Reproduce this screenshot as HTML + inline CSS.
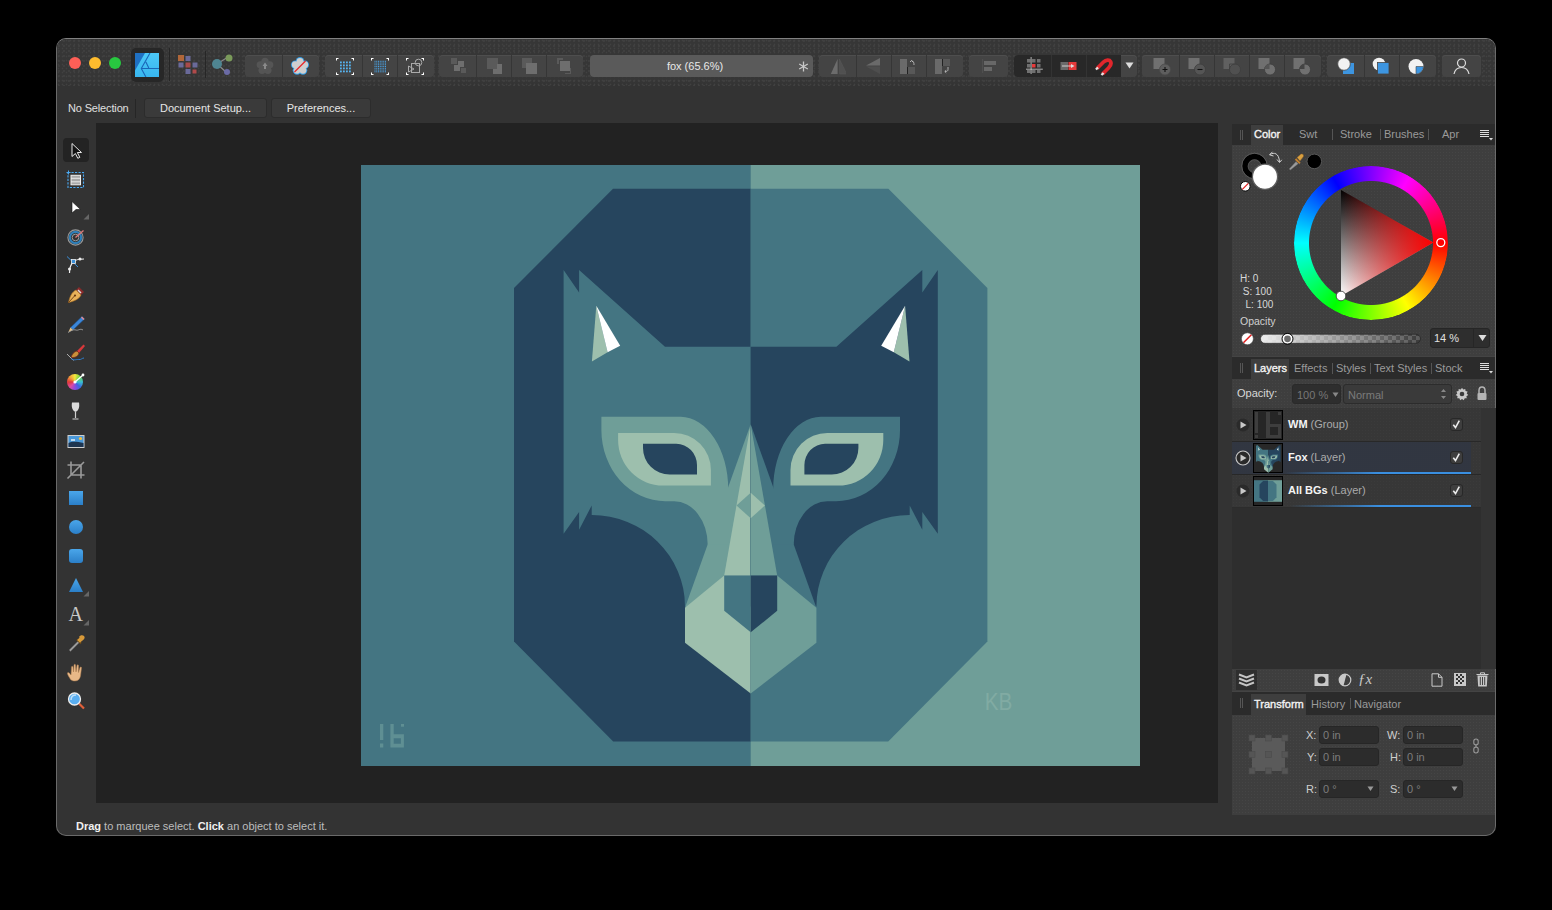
<!DOCTYPE html>
<html><head><meta charset="utf-8">
<style>
*{box-sizing:border-box;margin:0;padding:0}
html,body{width:1552px;height:910px;overflow:hidden;background:#000;font-family:"Liberation Sans",sans-serif;color:#ddd}
.a{position:absolute}
#win{position:absolute;left:56px;top:38px;width:1440px;height:798px;border-radius:10px;background:#333;border:1px solid #6a6a6a;border-top-color:#808080;overflow:hidden}
#topbar{position:absolute;left:0;top:0;width:1438px;height:47px;background-color:#363636;background-image:radial-gradient(circle at 1.5px 1.5px,#414141 0.7px,transparent 1.1px),radial-gradient(circle at 2px 2px,#3f3f3f 0.7px,transparent 1.1px),linear-gradient(#363636 85%,#333);background-size:4px 4px,5px 5px,100% 100%}
#ws{position:absolute;left:96px;top:123px;width:1122px;height:680px;background:#222}
.grp{position:absolute;top:55px;height:22px;background:#444;border-radius:4px;overflow:hidden;box-shadow:inset 0 1px 0 #4e4e4e}
.dv{position:absolute;top:0;width:1px;height:22px;background:#363636}
.ic{position:absolute;overflow:visible}
.tbtn{position:absolute;height:20px;background:#3a3a3a;border:1px solid #2c2c2c;border-radius:3px;font-size:11px;color:#e6e6e6;text-align:center;line-height:18px}
.panel{position:absolute;left:1232px;width:263px;background-color:#3e3e3e;background-image:radial-gradient(circle at 1.5px 1.5px,#454545 0.6px,transparent 1px);background-size:3px 3px}
.tabbar{position:absolute;left:0;width:263px;height:21px;background:#2b2b2b}
.tab{position:absolute;top:0;font-size:11px;color:#9a9a9a;line-height:21px;white-space:nowrap}
.tab.on{color:#f4f4f4;-webkit-text-stroke:0.35px #f4f4f4}

.sep{position:absolute;top:6px;width:1px;height:11px;background:#555}
.lbl{position:absolute;font-size:11px;color:#d0d0d0;white-space:nowrap}
.fld{position:absolute;background:#2c2c2c;border:1px solid #262626;border-radius:3px;font-size:11px;color:#7a7a7a;white-space:nowrap;padding-left:3px}
</style></head><body>
<div id="win"><div id="topbar"></div></div>
<div id="ws"></div>
<!-- traffic lights -->
<div class="a" style="left:69px;top:57px;width:12px;height:12px;border-radius:6px;background:#fe5f57"></div>
<div class="a" style="left:89px;top:57px;width:12px;height:12px;border-radius:6px;background:#febc2e"></div>
<div class="a" style="left:109px;top:57px;width:12px;height:12px;border-radius:6px;background:#28c840"></div>
<!-- logo -->
<div class="a" style="left:131px;top:48px;width:33px;height:34px;border-radius:5px;background:#272727"></div>
<svg class="a" style="left:135px;top:53px" width="24" height="24" viewBox="0 0 24 24">
<defs><linearGradient id="lg" x1="0" y1="0" x2="0" y2="1"><stop offset="0" stop-color="#4cc8f7"/><stop offset="1" stop-color="#38b6ef"/></linearGradient></defs>
<rect width="24" height="24" fill="url(#lg)"/>
<path d="M0,0 H10 L0,17.5 Z" fill="#1f70c2"/>
<path d="M15,0 L6.3,15.5 L10.9,24 M6.3,15.5 H24 M10.9,9 L13.8,15" stroke="#1a66b8" stroke-width="1.1" fill="none"/>
</svg>
<div class="a" style="left:169px;top:48px;width:1px;height:33px;background:#262626"></div>
<!-- persona -->
<svg class="a" style="left:177px;top:54px" width="22" height="22" viewBox="0 0 22 22">
<rect x="1" y="1" width="6" height="6" fill="#b0673a"/>
<rect x="8.5" y="2" width="5" height="5" fill="#6a6a9a"/>
<rect x="1.5" y="8.5" width="5" height="5" fill="#6a6a9a"/>
<rect x="8.5" y="8.5" width="5" height="5" fill="#a94a4a"/>
<rect x="15.5" y="8.5" width="5" height="5" fill="#6a6a9a"/>
<rect x="8.5" y="15" width="5" height="5" fill="#6a6a9a"/>
<rect x="15.5" y="15.5" width="4" height="4" fill="#b04a4a"/>
</svg>
<div class="a" style="left:205px;top:51px;width:1px;height:27px;background:#262626"></div>
<!-- share -->
<svg class="a" style="left:211px;top:54px" width="24" height="22" viewBox="0 0 24 22">
<path d="M6,10 L17,3 M6,10 L15,18" stroke="#8a8a8a" stroke-width="1.2"/>
<circle cx="6" cy="10" r="5" fill="#4f8591"/>
<circle cx="18" cy="4" r="3.5" fill="#7a9a5a"/>
<circle cx="16" cy="18" r="3" fill="#6a6aa5"/>
</svg>
<!-- G1 -->
<div class="grp" style="left:245px;width:74px"><div class="dv" style="left:37px"></div></div>
<svg class="a" style="left:255px;top:57px" width="20" height="18" viewBox="0 0 20 18"><g fill="#555"><circle cx="10.00" cy="4.30" r="3.6"/><circle cx="14.76" cy="7.75" r="3.6"/><circle cx="12.94" cy="13.35" r="3.6"/><circle cx="7.06" cy="13.35" r="3.6"/><circle cx="5.24" cy="7.75" r="3.6"/><circle cx="10" cy="9.3" r="5.2"/></g><path d="M10,5.5 L7.5,9 H9 V12 H11 V9 H12.5 Z" fill="#8a8a8a"/></svg>
<svg class="a" style="left:290px;top:57px" width="20" height="18" viewBox="0 0 20 18"><g fill="#2e9be6"><circle cx="10.00" cy="4.30" r="4.3"/><circle cx="14.76" cy="7.75" r="4.3"/><circle cx="12.94" cy="13.35" r="4.3"/><circle cx="7.06" cy="13.35" r="4.3"/><circle cx="5.24" cy="7.75" r="4.3"/><circle cx="10" cy="9.3" r="5.9"/></g><g fill="#cfcfcf"><circle cx="10.00" cy="4.30" r="3.4"/><circle cx="14.76" cy="7.75" r="3.4"/><circle cx="12.94" cy="13.35" r="3.4"/><circle cx="7.06" cy="13.35" r="3.4"/><circle cx="5.24" cy="7.75" r="3.4"/><circle cx="10" cy="9.3" r="5.0"/></g><path d="M4.5,15 L15.5,4" stroke="#e8262a" stroke-width="1.3"/></svg>
<!-- G2 -->
<div class="grp" style="left:325px;width:109px"><div class="dv" style="left:37px"></div><div class="dv" style="left:72px"></div></div>
<svg class="a" style="left:336px;top:58px" width="18" height="17" viewBox="0 0 18 17">
<g fill="#fff"><path d="M0,0 H2.5 V1 H1 V2.5 H0 Z"/><path d="M18,0 H15.5 V1 H17 V2.5 H18 Z"/><path d="M0,17 H2.5 V16 H1 V14.5 H0 Z"/><path d="M18,17 H15.5 V16 H17 V14.5 H18 Z"/></g>
<g fill="#56b3f0"><rect x="4" y="3.5" width="1.8" height="1.8"/><rect x="7" y="3.5" width="1.8" height="1.8"/><rect x="10" y="3.5" width="1.8" height="1.8"/><rect x="13" y="3.5" width="1.8" height="1.8"/>
<rect x="4" y="6.5" width="1.8" height="1.8"/><rect x="7" y="6.5" width="1.8" height="1.8"/><rect x="10" y="6.5" width="1.8" height="1.8"/><rect x="13" y="6.5" width="1.8" height="1.8"/>
<rect x="4" y="9.5" width="1.8" height="1.8"/><rect x="7" y="9.5" width="1.8" height="1.8"/><rect x="10" y="9.5" width="1.8" height="1.8"/><rect x="13" y="9.5" width="1.8" height="1.8"/>
<rect x="4" y="12.5" width="1.8" height="1.8"/><rect x="7" y="12.5" width="1.8" height="1.8"/><rect x="10" y="12.5" width="1.8" height="1.8"/><rect x="13" y="12.5" width="1.8" height="1.8"/></g>
</svg>
<svg class="a" style="left:371px;top:58px" width="18" height="17" viewBox="0 0 18 17">
<g fill="#fff"><path d="M0,0 H2.5 V1 H1 V2.5 H0 Z"/><path d="M18,0 H15.5 V1 H17 V2.5 H18 Z"/><path d="M0,17 H2.5 V16 H1 V14.5 H0 Z"/><path d="M18,17 H15.5 V16 H17 V14.5 H18 Z"/></g>
<g fill="#4aa6ea"><rect x="3.50" y="2.80" width="1" height="1"/><rect x="3.50" y="4.55" width="1" height="1"/><rect x="3.50" y="6.30" width="1" height="1"/><rect x="3.50" y="8.05" width="1" height="1"/><rect x="3.50" y="9.80" width="1" height="1"/><rect x="3.50" y="11.55" width="1" height="1"/><rect x="3.50" y="13.30" width="1" height="1"/><rect x="5.25" y="2.80" width="1" height="1"/><rect x="5.25" y="4.55" width="1" height="1"/><rect x="5.25" y="6.30" width="1" height="1"/><rect x="5.25" y="8.05" width="1" height="1"/><rect x="5.25" y="9.80" width="1" height="1"/><rect x="5.25" y="11.55" width="1" height="1"/><rect x="5.25" y="13.30" width="1" height="1"/><rect x="7.00" y="2.80" width="1" height="1"/><rect x="7.00" y="4.55" width="1" height="1"/><rect x="7.00" y="6.30" width="1" height="1"/><rect x="7.00" y="8.05" width="1" height="1"/><rect x="7.00" y="9.80" width="1" height="1"/><rect x="7.00" y="11.55" width="1" height="1"/><rect x="7.00" y="13.30" width="1" height="1"/><rect x="8.75" y="2.80" width="1" height="1"/><rect x="8.75" y="4.55" width="1" height="1"/><rect x="8.75" y="6.30" width="1" height="1"/><rect x="8.75" y="8.05" width="1" height="1"/><rect x="8.75" y="9.80" width="1" height="1"/><rect x="8.75" y="11.55" width="1" height="1"/><rect x="8.75" y="13.30" width="1" height="1"/><rect x="10.50" y="2.80" width="1" height="1"/><rect x="10.50" y="4.55" width="1" height="1"/><rect x="10.50" y="6.30" width="1" height="1"/><rect x="10.50" y="8.05" width="1" height="1"/><rect x="10.50" y="9.80" width="1" height="1"/><rect x="10.50" y="11.55" width="1" height="1"/><rect x="10.50" y="13.30" width="1" height="1"/><rect x="12.25" y="2.80" width="1" height="1"/><rect x="12.25" y="4.55" width="1" height="1"/><rect x="12.25" y="6.30" width="1" height="1"/><rect x="12.25" y="8.05" width="1" height="1"/><rect x="12.25" y="9.80" width="1" height="1"/><rect x="12.25" y="11.55" width="1" height="1"/><rect x="12.25" y="13.30" width="1" height="1"/><rect x="14.00" y="2.80" width="1" height="1"/><rect x="14.00" y="4.55" width="1" height="1"/><rect x="14.00" y="6.30" width="1" height="1"/><rect x="14.00" y="8.05" width="1" height="1"/><rect x="14.00" y="9.80" width="1" height="1"/><rect x="14.00" y="11.55" width="1" height="1"/><rect x="14.00" y="13.30" width="1" height="1"/></g>
</svg>
<svg class="a" style="left:406px;top:58px" width="18" height="17" viewBox="0 0 18 17">
<g fill="#fff"><path d="M0,0 H2.5 V1 H1 V2.5 H0 Z"/><path d="M18,0 H15.5 V1 H17 V2.5 H18 Z"/><path d="M0,17 H2.5 V16 H1 V14.5 H0 Z"/><path d="M18,17 H15.5 V16 H17 V14.5 H18 Z"/></g>
<g fill="none" stroke="#aaa" stroke-width="1"><rect x="5.5" y="5.5" width="8" height="9"/><circle cx="12.5" cy="4.5" r="3.3"/><path d="M2.5,8 V14 L8,11 Z"/></g>
</svg>
<!-- G3 -->
<div class="grp" style="left:439px;width:144px"><div class="dv" style="left:37px"></div><div class="dv" style="left:72px"></div><div class="dv" style="left:107px"></div></div>
<svg class="a" style="left:450px;top:57px" width="16" height="17" viewBox="0 0 16 17">
<rect x="1" y="1" width="6" height="6" fill="#5a5a5a"/><rect x="8" y="4" width="6" height="6" fill="#6e6e6e"/><rect x="4" y="8" width="6" height="6" fill="#6e6e6e"/><rect x="11" y="11" width="5" height="5" fill="#5a5a5a"/>
</svg>
<svg class="a" style="left:486px;top:57px" width="16" height="17" viewBox="0 0 16 17">
<rect x="1" y="1" width="11" height="11" fill="#5a5a5a"/><path d="M7,17 H16 V7 H11 V12 H7 Z" fill="#6e6e6e"/>
</svg>
<svg class="a" style="left:521px;top:57px" width="16" height="17" viewBox="0 0 16 17">
<rect x="1" y="1" width="10" height="10" fill="#5a5a5a"/><rect x="5" y="6" width="11" height="11" fill="#6e6e6e"/>
</svg>
<svg class="a" style="left:556px;top:57px" width="16" height="17" viewBox="0 0 16 17">
<path d="M1,1 H7 V3 H3 V7 H1 Z" fill="#5a5a5a"/><rect x="4" y="4" width="10" height="10" fill="#6e6e6e"/><path d="M15,11 V17 H9 V16 H14 V11 Z" fill="#5a5a5a"/>
</svg>
<!-- title -->
<div class="a" style="left:590px;top:55px;width:223px;height:22px;border-radius:4px;background:#5a5a5a;font-size:11px;color:#e8e8e8;line-height:22px;text-align:center;padding-right:13px">fox (65.6%)</div>
<svg class="a" style="left:797px;top:60px" width="13" height="13" viewBox="0 0 13 13"><path d="M6.5,1.5 V11.5 M2.2,4 L10.8,9 M2.2,9 L10.8,4" stroke="#c8c8c8" stroke-width="1.3"/></svg>
<!-- G4 -->
<div class="grp" style="left:819px;width:144px"><div class="dv" style="left:37px"></div><div class="dv" style="left:72px"></div><div class="dv" style="left:107px"></div></div>
<svg class="a" style="left:830px;top:57px" width="16" height="18" viewBox="0 0 16 18">
<path d="M7.6,2 V17 H0.8 Z" fill="#6c6c6c"/><path d="M9.4,2 V17 H16.8 Z" fill="#505050" stroke="#5a5a5a" stroke-width="0.5"/>
</svg>
<svg class="a" style="left:865px;top:57px" width="16" height="18" viewBox="0 0 16 18">
<path d="M15,1 V8.5 H1 Z" fill="#6a6a6a"/><path d="M15,9.5 V17 L1,9.5 Z" fill="#4e4e4e"/>
</svg>
<svg class="a" style="left:900px;top:57px" width="16" height="18" viewBox="0 0 16 18">
<rect x="0" y="2" width="7" height="15" fill="#6a6a6a"/><rect x="7" y="10" width="1" height="7" fill="#222"/><rect x="8" y="10" width="7" height="7" fill="#585858"/>
<path d="M10,5 L11.5,3.5 L13,5 M11.5,3.8 C13.5,4 14,5.5 14,8" stroke="#bbb" stroke-width="0.9" fill="none"/>
</svg>
<svg class="a" style="left:935px;top:57px" width="16" height="18" viewBox="0 0 16 18">
<rect x="0" y="2" width="7" height="15" fill="#6a6a6a"/><rect x="7" y="2" width="1" height="7" fill="#222"/><rect x="8" y="2" width="7" height="7" fill="#585858"/>
<path d="M13,10 V12.5 C13,14 12,14.5 10,14.5 M11.2,13.2 L9.8,14.5 L11.2,15.8" stroke="#bbb" stroke-width="0.9" fill="none"/>
</svg>
<!-- G5 -->
<div class="grp" style="left:969px;width:39px"></div>
<svg class="a" style="left:978px;top:57px" width="18" height="18" viewBox="0 0 18 18">
<rect x="4.3" y="2" width="0.8" height="14" fill="#555"/><rect x="6" y="4" width="12" height="4" fill="#686868"/><rect x="6" y="10" width="8" height="4" fill="#686868"/>
</svg>
<!-- G6 snapping -->
<div class="grp" style="left:1014px;width:123px;background:#444"><div class="a" style="left:0;top:0;width:107px;height:22px;background:#282828"></div><div class="dv" style="left:37px;background:#333"></div><div class="dv" style="left:72px;background:#333"></div></div>
<svg class="a" style="left:1025px;top:56px" width="20" height="20" viewBox="0 0 20 20">
<g fill="#707070"><rect x="2" y="3" width="3.5" height="3.5"/><rect x="7" y="3" width="3.5" height="3.5"/><rect x="12" y="3" width="3.5" height="3.5"/><rect x="2" y="8" width="3.5" height="3.5"/><rect x="12" y="8" width="3.5" height="3.5"/><rect x="2" y="14" width="3.5" height="3"/><rect x="7" y="14" width="3.5" height="3"/><rect x="12" y="14" width="3.5" height="3"/></g>
<rect x="7" y="8" width="3.5" height="3.5" fill="#e8393a"/>
<path d="M6.1,1 V18 M1,13.2 H17.8" stroke="#d4d4d4" stroke-width="0.8"/>
</svg>
<svg class="a" style="left:1059px;top:56px" width="20" height="20" viewBox="0 0 20 20">
<rect x="1.5" y="6" width="7.5" height="8" fill="#6a6a6a"/><rect x="9.5" y="6" width="8" height="8" fill="#e53a3b"/>
<path d="M3,10 H14" stroke="#ddd" stroke-width="0.9"/><path d="M12,8 L15.5,10 L12,12 Z" fill="#ddd"/>
</svg>
<svg class="a" style="left:1094px;top:56px" width="20" height="20" viewBox="0 0 20 20">
<path d="M3,12.5 L9.5,6 C12,3.5 15.5,3.5 16.5,5.5 C17.5,7.5 16.5,10 14.5,12 L8.5,18" stroke="#e0262c" stroke-width="3.8" fill="none" stroke-linecap="butt"/>
<path d="M2.2,11.7 L3.8,13.3 M7.7,17.2 L9.3,18.8" stroke="#e4e4e4" stroke-width="3"/>
</svg>
<svg class="a" style="left:1125px;top:61px" width="9" height="9" viewBox="0 0 9 9"><path d="M0.5,1.5 H8.5 L4.5,7.5 Z" fill="#ddd"/></svg>
<!-- G7 -->
<div class="grp" style="left:1142px;width:179px"><div class="dv" style="left:37px"></div><div class="dv" style="left:72px"></div><div class="dv" style="left:107px"></div><div class="dv" style="left:142px"></div></div>
<svg class="a" style="left:1152px;top:57px" width="20" height="19" viewBox="0 0 20 19">
<rect x="1.5" y="1" width="11" height="11" fill="#707070"/><circle cx="13" cy="12.5" r="5.5" fill="#5e5e5e" stroke="#4a4a4a" stroke-width="0.8"/><path d="M10.5,12.5 H15.5 M13,10 V15" stroke="#111" stroke-width="1.1"/>
</svg>
<svg class="a" style="left:1187px;top:57px" width="20" height="19" viewBox="0 0 20 19">
<rect x="1.5" y="1" width="11" height="11" fill="#707070"/><circle cx="13" cy="12.5" r="5.5" fill="#555" stroke="#3e3e3e" stroke-width="0.8"/><path d="M10.5,12.5 H15.5" stroke="#111" stroke-width="1.1"/>
</svg>
<svg class="a" style="left:1222px;top:57px" width="20" height="19" viewBox="0 0 20 19">
<rect x="1.5" y="1" width="11" height="11" fill="#606060"/><circle cx="13" cy="12.5" r="5.5" fill="#505050" stroke="#3e3e3e" stroke-width="0.8"/><path d="M7.5,12 V7 H12.5" fill="none" stroke="#3e3e3e" stroke-width="0.8"/>
</svg>
<svg class="a" style="left:1257px;top:57px" width="20" height="19" viewBox="0 0 20 19">
<rect x="1.5" y="1" width="11" height="11" fill="#707070"/><circle cx="13" cy="12.5" r="5.5" fill="#707070" stroke="#3e3e3e" stroke-width="0.8"/><path d="M7.5,12 A5.5,5.5 0 0 1 12.5,7 V12 Z" fill="#555"/>
</svg>
<svg class="a" style="left:1292px;top:57px" width="20" height="19" viewBox="0 0 20 19">
<rect x="1.5" y="1" width="11" height="11" fill="#707070"/><circle cx="13" cy="12.5" r="5.5" fill="#707070" stroke="#3e3e3e" stroke-width="0.8"/><path d="M7.5,12 A5.5,5.5 0 0 1 12.5,7 V12 Z" fill="#444"/>
</svg>
<!-- G8 -->
<div class="grp" style="left:1327px;width:109px"><div class="dv" style="left:37px"></div><div class="dv" style="left:72px"></div></div>
<svg class="a" style="left:1336px;top:57px" width="20" height="19" viewBox="0 0 20 19">
<rect x="7" y="6" width="11" height="11" fill="#3d95e0"/><circle cx="8" cy="7" r="6.3" fill="#f2f2f2" stroke="#444" stroke-width="0.8"/>
</svg>
<svg class="a" style="left:1371px;top:57px" width="20" height="19" viewBox="0 0 20 19">
<circle cx="8" cy="7" r="6.3" fill="#f2f2f2"/><rect x="6.5" y="5.5" width="11.5" height="11.5" fill="#3d95e0" stroke="#444" stroke-width="0.8"/>
</svg>
<svg class="a" style="left:1406px;top:57px" width="20" height="19" viewBox="0 0 20 19">
<circle cx="10" cy="9.5" r="7.5" fill="#f2f2f2"/><path d="M10,9.5 H17.5 A7.5,7.5 0 0 1 10,17 Z" fill="#3d95e0" stroke="#444" stroke-width="0.6"/>
</svg>
<!-- G9 -->
<div class="grp" style="left:1442px;width:39px"></div>
<svg class="a" style="left:1452px;top:57px" width="19" height="19" viewBox="0 0 19 19">
<circle cx="9.5" cy="6" r="4" fill="none" stroke="#ddd" stroke-width="1.2"/><path d="M2,17 C3,12 6,10.5 9.5,10.5 C13,10.5 16,12 17,17" fill="none" stroke="#ddd" stroke-width="1.2"/>
</svg>
<!-- context bar -->
<div class="lbl" style="left:68px;top:102px;color:#e0e0e0;letter-spacing:-0.15px">No Selection</div>
<div class="a" style="left:135px;top:99px;width:1px;height:19px;background:#262626"></div>
<div class="tbtn" style="left:144px;top:98px;width:123px">Document Setup...</div>
<div class="tbtn" style="left:271px;top:98px;width:100px">Preferences...</div>
<!-- status -->
<div class="lbl" style="left:76px;top:820px;color:#bdbdbd"><b style="color:#f0f0f0">Drag</b> to marquee select. <b style="color:#f0f0f0">Click</b> an object to select it.</div>
<!-- tools -->
<div class="a" style="left:63px;top:138px;width:26px;height:24px;border-radius:4px;background:#232323"></div>
<svg class="a" style="left:66px;top:140px" width="20" height="20" viewBox="0 0 20 20">
<path d="M6,3.5 L15.5,12.5 H11.3 L13.8,17.3 L11.8,18.3 L9.4,13.5 L6,16.5 Z" fill="#111" stroke="#e8e8e8" stroke-width="1" stroke-linejoin="round"/>
</svg>
<svg class="a" style="left:66px;top:170px" width="20" height="20" viewBox="0 0 20 20">
<path d="M0.5,2.5 H4.5 M2.5,0.5 V4.5" stroke="#4aa8f0" stroke-width="1"/>
<rect x="2" y="2.5" width="15.5" height="15" fill="none" stroke="#4aa8f0" stroke-width="1.1" stroke-dasharray="2.2 1.3"/>
<rect x="5" y="5.3" width="9.5" height="9.5" fill="#a8a8a8" stroke="#eee" stroke-width="1"/>
<path d="M5,8.3 H14.5 M5,11.8 H14.5" stroke="#eee" stroke-width="0.9"/>
</svg>
<svg class="a" style="left:66px;top:199px" width="24" height="22" viewBox="0 0 24 22">
<path d="M6,2.5 L14.5,10.5 H10 L6,14 Z" fill="#fff" stroke="#111" stroke-width="0.6"/>
<path d="M23,15 V20.5 H17.5 Z" fill="#666"/>
</svg>
<svg class="a" style="left:66px;top:227px" width="20" height="20" viewBox="0 0 20 20">
<circle cx="9.5" cy="10.5" r="7.6" fill="none" stroke="#9a9a9a" stroke-width="1.1"/>
<circle cx="9.5" cy="10.5" r="5.6" fill="none" stroke="#2f7fb8" stroke-width="2.2"/>
<circle cx="9.5" cy="10.5" r="3.3" fill="none" stroke="#9a9a9a" stroke-width="1"/>
<path d="M9.5,10.5 L17.5,3.5" stroke="#e07a7a" stroke-width="1.3"/>
</svg>
<svg class="a" style="left:66px;top:256px" width="20" height="20" viewBox="0 0 20 20">
<path d="M7.5,5.5 C5,8 3.5,11 3.5,17" stroke="#eee" stroke-width="1.2" fill="none"/>
<path d="M7.5,5.5 C10,3.5 13,3 18,3" stroke="#eee" stroke-width="1.2" fill="none"/>
<path d="M1,0.5 L12,11" stroke="#3a8fd8" stroke-width="1"/>
<rect x="5.5" y="3.5" width="4" height="4" fill="#3a8fd8" stroke="#eee" stroke-width="0.8"/>
<circle cx="14" cy="3" r="1.5" fill="#eee"/><circle cx="3.5" cy="13" r="1.5" fill="#eee"/>
</svg>
<svg class="a" style="left:66px;top:285px" width="20" height="20" viewBox="0 0 20 20">
<path d="M13,2 L18,7 L15,10 L10,5 Z" fill="#8a2a2a"/>
<path d="M12,5 L15,8" stroke="#ddd" stroke-width="1.5"/>
<path d="M10,5 L15,10 C13,14 9,16 2.5,17.5 C4,11 6,7 10,5 Z" fill="#e8b25a" stroke="#b07020" stroke-width="0.6"/>
<path d="M2.5,17.5 L8.5,11" stroke="#6a3a10" stroke-width="0.9"/><circle cx="9" cy="10.5" r="1.1" fill="#6a3a10"/>
</svg>
<svg class="a" style="left:66px;top:314px" width="20" height="20" viewBox="0 0 20 20">
<path d="M16,2.5 L18.5,5 L7,16 L4.5,13.5 Z" fill="#3b86d8" stroke="#1d4f8a" stroke-width="0.6"/>
<path d="M16,2.5 L18.5,5 L17.5,6 L15,3.5 Z" fill="#e88a8a"/>
<path d="M4.5,13.5 L7,16 L2.5,18 Z" fill="#e8c080"/>
<path d="M2,18.5 C5,17 7,15 10,16 C12,17 14,14 17,16" stroke="#aaa" stroke-width="0.8" fill="none"/>
</svg>
<svg class="a" style="left:66px;top:343px" width="20" height="20" viewBox="0 0 20 20">
<path d="M17.5,1.5 L19,3 L13,10 L11,8 Z" fill="#d8383a"/>
<path d="M11,8 L13,10 C12,14 8,15 5,14.5 C6,11 8,8.5 11,8 Z" fill="#c8903a" stroke="#7a2a1a" stroke-width="0.8"/>
<path d="M1,11 L7.5,17.5" stroke="#ccc" stroke-width="0.8"/>
<path d="M5,15.5 C8,18 11,16 13,16.5 C15,17 16,15 18,15" stroke="#2f7fd0" stroke-width="1" fill="none"/>
</svg>
<div class="a" style="left:67px;top:374px;width:16px;height:16px;border-radius:8px;background:conic-gradient(#f4e93a,#6ad04a,#3ac0d0,#3a6ae0,#8a4ae0,#e04aa0,#e03a3a,#f0a03a,#f4e93a)"></div>
<svg class="a" style="left:66px;top:372px" width="20" height="20" viewBox="0 0 20 20">
<circle cx="9" cy="10" r="1.6" fill="#fff"/><path d="M9,10 L17,3" stroke="#fff" stroke-width="1.2"/><circle cx="17" cy="3" r="1.4" fill="#fff"/>
</svg>
<svg class="a" style="left:66px;top:401px" width="20" height="20" viewBox="0 0 20 20">
<path d="M6,1.5 H13 C13.5,5 13.5,9 9.5,11 C5.5,9 5.5,5 6,1.5 Z" fill="#dcdcdc"/>
<path d="M9.5,11 V17 M6.5,18 H12.5" stroke="#cfcfcf" stroke-width="1.2"/>
</svg>
<svg class="a" style="left:66px;top:431px" width="20" height="20" viewBox="0 0 20 20">
<rect x="1.5" y="4" width="17" height="13" fill="#cfcfcf"/>
<rect x="2.5" y="5" width="15" height="11" fill="#4a98d8"/>
<path d="M2.5,12 C6,10 11,10.5 17.5,12 V16 H2.5 Z" fill="#1e3550"/>
<circle cx="14.5" cy="7.5" r="1.6" fill="#f4c040"/><path d="M5,9 H9" stroke="#fff" stroke-width="1.3"/>
</svg>
<svg class="a" style="left:66px;top:460px" width="20" height="20" viewBox="0 0 20 20">
<path d="M5,1.5 V15 H18.5 M1.5,5 H15 V18.5 M1.5,18.5 L18,2" stroke="#9a9a9a" stroke-width="1.6" fill="none"/>
</svg>
<div class="a" style="left:69px;top:491px;width:14px;height:14px;background:linear-gradient(#4aa6ea,#2b7fc8)"></div>
<div class="a" style="left:69px;top:520px;width:14px;height:14px;border-radius:7px;background:linear-gradient(#4aa6ea,#2b7fc8)"></div>
<div class="a" style="left:69px;top:549px;width:14px;height:14px;border-radius:3px;background:linear-gradient(#4aa6ea,#2b7fc8)"></div>
<svg class="a" style="left:66px;top:576px" width="24" height="22" viewBox="0 0 24 22">
<defs><linearGradient id="bl" x1="0" y1="0" x2="0" y2="1"><stop offset="0" stop-color="#4aa6ea"/><stop offset="1" stop-color="#2b7fc8"/></linearGradient></defs>
<path d="M10,2 L17,16 H3 Z" fill="url(#bl)"/><path d="M23,15 V20.5 H17.5 Z" fill="#666"/>
</svg>
<div class="a" style="left:68.5px;top:603px;font-family:'Liberation Serif',serif;font-size:20px;color:#c8c8c8;line-height:22px">A</div>
<svg class="a" style="left:66px;top:605px" width="24" height="22" viewBox="0 0 24 22"><path d="M23,15 V20.5 H17.5 Z" fill="#666"/></svg>
<svg class="a" style="left:66px;top:633px" width="20" height="20" viewBox="0 0 20 20">
<path d="M3,17 L12,8 L13.5,9.5 L4.5,18.5 Z" fill="#9a9a9a" stroke="#555" stroke-width="0.5"/>
<path d="M11,6.5 L15,10.5" stroke="#6a4a1a" stroke-width="2"/>
<path d="M13,4 C14,2 17,2 18,3 C19,4 19,6 16.5,7.5 L13,4 Z" fill="#d89a3a"/>
<rect x="12" y="5" width="4" height="4" transform="rotate(45 14 7)" fill="#d89a3a"/>
</svg>
<svg class="a" style="left:66px;top:662px" width="20" height="20" viewBox="0 0 20 20">
<path d="M5,18 C3,15 1,12 1.5,11 C2,10 3,10.5 5,13 L5.5,5 C5.5,4 7,4 7,5 L7.5,10 L8,3 C8,2 9.5,2 9.5,3 L10,10 L11,3.5 C11,2.5 12.5,2.5 12.5,3.5 L12.5,10.5 L14,5.5 C14.3,4.5 15.8,5 15.5,6 L14.5,14 C14,17 12,19 9,19 C7,19 6,18.5 5,18 Z" fill="#e8b888" stroke="#a8784a" stroke-width="0.5"/>
</svg>
<svg class="a" style="left:66px;top:690px" width="20" height="20" viewBox="0 0 20 20">
<path d="M13,13.5 L18,18.5" stroke="#e0603a" stroke-width="2.2"/>
<circle cx="8.5" cy="9" r="6" fill="#5aaef0" stroke="#eee" stroke-width="1.3"/>
<path d="M5,10 C5,7 7,5 10,5" stroke="#bde0fa" stroke-width="1.5" fill="none"/>
</svg>
<!-- color panel -->
<div class="panel" style="top:124px;height:232px"></div>
<div class="a" style="left:1232px;top:124px;width:263px;height:21px;background:#2b2b2b"></div>
<div class="a" style="left:1251px;top:125px;width:32px;height:20px;background:#3e3e3e"></div>
<div class="a" style="left:1240px;top:130px;width:1px;height:10px;background:#555"></div><div class="a" style="left:1242px;top:130px;width:1px;height:10px;background:#555"></div>
<div class="tab on" style="left:1254px;top:124px">Color</div>
<div class="tab" style="left:1299px;top:124px">Swt</div>
<div class="sep" style="left:1332px;top:129px"></div>
<div class="tab" style="left:1340px;top:124px">Stroke</div>
<div class="sep" style="left:1380px;top:129px"></div>
<div class="tab" style="left:1384px;top:124px">Brushes</div>
<div class="sep" style="left:1428px;top:129px"></div>
<div class="tab" style="left:1442px;top:124px">Apr</div>
<svg class="a" style="left:1479px;top:129px" width="14" height="12" viewBox="0 0 14 12"><path d="M1,1.5 H10 M1,3.5 H10 M1,5.5 H10 M1,7.5 H10" stroke="#ddd" stroke-width="1"/><path d="M10,9 H14 L12,11.5 Z" fill="#ddd"/></svg>
<!-- color content -->
<svg class="a" style="left:1232px;top:145px" width="264" height="211" viewBox="1232 145 264 211">
<defs>
<linearGradient id="tg1" x1="1341" y1="190" x2="1341" y2="296" gradientUnits="userSpaceOnUse"><stop offset="0" stop-color="#000"/><stop offset="1" stop-color="#fff"/></linearGradient>
<linearGradient id="tg2" x1="1341" y1="243" x2="1433" y2="243" gradientUnits="userSpaceOnUse"><stop offset="0" stop-color="#f00" stop-opacity="0"/><stop offset="1" stop-color="#f00" stop-opacity="1"/></linearGradient>
<pattern id="chk" width="8" height="8" patternUnits="userSpaceOnUse"><rect width="8" height="8" fill="#3a3a3a"/><rect width="4" height="4" fill="#5a5a5a"/><rect x="4" y="4" width="4" height="4" fill="#5a5a5a"/></pattern>
<linearGradient id="opg" x1="0" y1="0" x2="1" y2="0"><stop offset="0" stop-color="#fff" stop-opacity="0.9"/><stop offset="1" stop-color="#fff" stop-opacity="0"/></linearGradient>
</defs>
<circle cx="1254.5" cy="166" r="9.5" fill="none" stroke="#000" stroke-width="5.6"/>
<circle cx="1254.5" cy="166" r="12.8" fill="none" stroke="#5e5e5e" stroke-width="0.9"/><circle cx="1254.6" cy="166.3" r="6.5" fill="none" stroke="#555" stroke-width="0.8"/>
<circle cx="1265" cy="176.7" r="12.6" fill="#fff" stroke="#5e5e5e" stroke-width="1.3"/>
<circle cx="1245.3" cy="186.3" r="4.8" fill="#fff" stroke="#0a0a0a" stroke-width="1"/><path d="M1242.3,189.3 L1248.3,183.3" stroke="#e02020" stroke-width="1.2"/>
<path d="M1270,154.5 C1274,152 1279,153 1279.5,162" stroke="#d0d0d0" stroke-width="1" fill="none"/><path d="M1269.5,154.8 L1272.5,151.8 M1269.5,154.8 L1273.5,156 M1279.5,162.5 L1277,159.5 M1279.5,162.5 L1281.8,159.8" stroke="#d0d0d0" stroke-width="1" fill="none"/>

<path d="M1289,169 L1296,161.5 L1298.3,163.8 L1290.5,170 Z" fill="#9a9a9a" stroke="#555" stroke-width="0.4"/>
<path d="M1297,157.5 L1301,154 C1303,153.5 1304,155 1303.3,156.8 L1300,161 Z" fill="#d9a040" stroke="#8a5a20" stroke-width="0.4"/>
<path d="M1295.5,159 L1300,163.3" stroke="#c08030" stroke-width="1.8"/>
<circle cx="1314.3" cy="161.4" r="7.3" fill="#000" stroke="#5e5e5e" stroke-width="0.9"/>
<!-- wheel -->
<foreignObject x="1294" y="166" width="154" height="154"><div style="width:154px;height:154px;border-radius:77px;background:conic-gradient(from 90deg,#f00,#ff0 60deg,#0f0 120deg,#0ff 180deg,#00f 240deg,#f0f 300deg,#f00 360deg);-webkit-mask:radial-gradient(circle,transparent 61.5px,#000 62.5px);mask:radial-gradient(circle,transparent 61.5px,#000 62.5px)"></div></foreignObject>
<path d="M1341,190 L1433.3,242.6 L1341,296 Z" fill="url(#tg1)"/>
<path d="M1341,190 L1433.3,242.6 L1341,296 Z" fill="url(#tg2)"/>
<circle cx="1440.8" cy="242.6" r="4" fill="none" stroke="#fff" stroke-width="1.3"/>
<circle cx="1341" cy="296" r="4.8" fill="#fff" stroke="#333" stroke-width="0.8"/>
<!-- opacity slider -->
<circle cx="1247.4" cy="338.8" r="6" fill="#fff" stroke="#444" stroke-width="0.6"/><path d="M1243.4,342.8 L1251.4,334.8" stroke="#e02020" stroke-width="1.5"/>
<rect x="1260.5" y="334.3" width="160" height="9" rx="4.5" fill="url(#chk)"/>
<rect x="1260.5" y="334.3" width="160" height="9" rx="4.5" fill="url(#opg)" stroke="#222" stroke-width="0.6"/>
<circle cx="1287.5" cy="338.8" r="4.1" fill="#6a6a6a" stroke="#fff" stroke-width="1.5"/>
<circle cx="1287.5" cy="338.8" r="5.5" fill="none" stroke="#0a0a0a" stroke-width="1"/>
</svg>
<div class="lbl" style="left:1240px;top:272px;font-size:10px;line-height:13px;color:#d8d8d8">H: 0<br>&nbsp;S: 100<br>&nbsp;&nbsp;L: 100</div>
<div class="lbl" style="left:1240px;top:315px;font-size:10.5px;color:#d0d0d0">Opacity</div>
<div class="fld" style="left:1430px;top:328px;width:60px;height:20px;line-height:18px;color:#e0e0e0;background:#2e2e2e;font-size:11px">14 %</div>
<div class="a" style="left:1473px;top:329px;width:1px;height:18px;background:#262626"></div>
<svg class="a" style="left:1478px;top:334px" width="9" height="8" viewBox="0 0 9 8"><path d="M0.5,1 H8.5 L4.5,7 Z" fill="#ddd"/></svg>
<!-- layers panel -->
<div class="a" style="left:1232px;top:356px;width:263px;height:2px;background:#444"></div>
<div class="a" style="left:1232px;top:357px;width:263px;height:22px;background:#2b2b2b"></div>
<div class="a" style="left:1251px;top:359px;width:38px;height:20px;background:#3e3e3e"></div>
<div class="a" style="left:1240px;top:363px;width:1px;height:10px;background:#555"></div><div class="a" style="left:1242px;top:363px;width:1px;height:10px;background:#555"></div>
<div class="tab on" style="left:1254px;top:358px">Layers</div>
<div class="tab" style="left:1294px;top:358px">Effects</div>
<div class="sep" style="left:1332px;top:363px"></div>
<div class="tab" style="left:1336px;top:358px">Styles</div>
<div class="sep" style="left:1370px;top:363px"></div>
<div class="tab" style="left:1374px;top:358px">Text Styles</div>
<div class="sep" style="left:1431px;top:363px"></div>
<div class="tab" style="left:1435px;top:358px">Stock</div>
<svg class="a" style="left:1479px;top:362px" width="14" height="12" viewBox="0 0 14 12"><path d="M1,1.5 H10 M1,3.5 H10 M1,5.5 H10 M1,7.5 H10" stroke="#ddd" stroke-width="1"/><path d="M10,9 H14 L12,11.5 Z" fill="#ddd"/></svg>
<div class="panel" style="top:379px;height:29px"></div>
<div class="lbl" style="left:1237px;top:387px;color:#d8d8d8">Opacity:</div>
<div class="fld" style="left:1292px;top:384px;width:49px;height:20px;line-height:20px;padding-left:4px;color:#777;background:#2e2e2e;border-color:#2a2a2a">100 %</div>
<svg class="a" style="left:1332px;top:392px" width="7" height="6" viewBox="0 0 7 6"><path d="M0.5,0.5 H6.5 L3.5,5 Z" fill="#888"/></svg>
<div class="fld" style="left:1343px;top:384px;width:109px;height:20px;line-height:20px;padding-left:4px;color:#7a7a7a;background:#3a3a3a;border-color:#2c2c2c">Normal</div>
<svg class="a" style="left:1440px;top:387px" width="7" height="14" viewBox="0 0 7 14"><path d="M1,5 H6 L3.5,2 Z M1,9 H6 L3.5,12 Z" fill="#888"/></svg>
<svg class="a" style="left:1455px;top:387px" width="14" height="14" viewBox="0 0 14 14">
<path d="M7,0.8 L8.2,2.6 L10.3,1.9 L10.5,4 L12.6,4.5 L11.7,6.5 L13.2,8 L11.4,9.2 L11.8,11.3 L9.7,11.3 L8.8,13.2 L7,12 L5.2,13.2 L4.3,11.3 L2.2,11.3 L2.6,9.2 L0.8,8 L2.3,6.5 L1.4,4.5 L3.5,4 L3.7,1.9 L5.8,2.6 Z" fill="#c8c8c8"/>
<circle cx="7" cy="7" r="2.3" fill="#3b3b3b"/>
</svg>
<svg class="a" style="left:1476px;top:386px" width="12" height="15" viewBox="0 0 12 15">
<path d="M3,7 V4.5 C3,2 4.5,1 6,1 C7.5,1 9,2 9,4.5 V7" stroke="#b4b4b4" stroke-width="1.5" fill="none"/><rect x="1.5" y="7" width="9" height="7" rx="1" fill="#b4b4b4"/>
</svg>
<!-- list -->
<div class="a" style="left:1232px;top:408px;width:263px;height:261px;background:#2e2e2e"></div>
<div class="a" style="left:1232px;top:408px;width:249px;height:99px;background-color:#373737;background-image:radial-gradient(circle at 1.5px 1.5px,#3b3b3b 0.5px,transparent 0.9px);background-size:3px 3px"></div>
<div class="a" style="left:1481px;top:408px;width:15px;height:261px;background:#333"></div>
<div class="a" style="left:1232px;top:441px;width:249px;height:1px;background:#282828"></div>
<div class="a" style="left:1232px;top:442px;width:239px;height:32px;background-color:#2c3038;background-image:radial-gradient(circle at 1px 1px,#343a46 0.6px,transparent 0.9px);background-size:2px 2px"></div>
<div class="a" style="left:1232px;top:474px;width:249px;height:1px;background:#282828"></div>
<div class="a" style="left:1232px;top:507px;width:249px;height:1px;background:#2c2c2c"></div>
<div class="a" style="left:1285px;top:472px;width:186px;height:2px;background:linear-gradient(90deg,rgba(58,143,224,0),#3a8fe0 50%,#3a8fe0)"></div>
<div class="a" style="left:1290px;top:505px;width:181px;height:2px;background:linear-gradient(90deg,rgba(58,143,224,0),#3a8fe0 50%,#3a8fe0)"></div>
<!-- expanders -->
<svg class="a" style="left:1234px;top:416px" width="18" height="18" viewBox="0 0 18 18"><circle cx="9" cy="9" r="6.5" fill="#2a2a2a"/><path d="M6.5,5.5 L12.5,9 L6.5,12.5 Z" fill="#c8c8c8"/></svg>
<svg class="a" style="left:1234px;top:449px" width="18" height="18" viewBox="0 0 18 18"><circle cx="9" cy="9" r="7" fill="#2a2a2a" stroke="#c8c8c8" stroke-width="1.1"/><path d="M6.5,5.5 L12.5,9 L6.5,12.5 Z" fill="#c8c8c8"/></svg>
<svg class="a" style="left:1234px;top:482px" width="18" height="18" viewBox="0 0 18 18"><circle cx="9" cy="9" r="6.5" fill="#2a2a2a"/><path d="M6.5,5.5 L12.5,9 L6.5,12.5 Z" fill="#c8c8c8"/></svg>
<!-- thumbs -->
<svg class="a" style="left:1253px;top:410px" width="30" height="30" viewBox="0 0 30 30">
<rect width="30" height="30" fill="#000"/><rect x="1" y="1" width="28" height="28" fill="#262626"/>
<rect x="1" y="1" width="28" height="28" fill="none"/>
<rect x="2" y="2" width="3" height="21" fill="#3e3e3e"/><rect x="2" y="25" width="3" height="3" fill="#3e3e3e"/>
<rect x="13" y="2" width="4" height="26" fill="#3e3e3e"/><rect x="13" y="14" width="15" height="3" fill="#3e3e3e"/><rect x="25" y="14" width="3" height="14" fill="#3e3e3e"/><rect x="13" y="25" width="15" height="3" fill="#3e3e3e"/><rect x="25" y="2" width="3" height="3" fill="#3e3e3e"/>
</svg>
<svg class="a" style="left:1253px;top:443px" width="30" height="30" viewBox="0 0 30 30">
<rect width="30" height="30" fill="#000"/><rect x="1" y="1" width="28" height="28" fill="#282828"/>
<g transform="translate(-34.085 -15.966) scale(0.0658)">
<g><use href="#face" fill="#447582"/><use href="#bro" fill="#6f9e98"/><use href="#band" fill="#6f9e98"/><use href="#inner" fill="#9dbfad"/><use href="#eye" fill="#26455e"/><use href="#bri" fill="#9dbfad"/><use href="#dia" fill="#6f9e98"/><use href="#snout" fill="#9dbfad"/><use href="#nose" fill="#447582"/><use href="#earG" fill="#9dbfad"/><use href="#earW" fill="#fff"/></g>
<g transform="translate(1501.4 0) scale(-1 1)"><use href="#face" fill="#26455e"/><use href="#bro" fill="#447582"/><use href="#band" fill="#447582"/><use href="#inner" fill="#9dbfad"/><use href="#eye" fill="#26455e"/><use href="#bri" fill="#6f9e98"/><use href="#dia" fill="#9dbfad"/><use href="#snout" fill="#6f9e98"/><use href="#nose" fill="#26455e"/><use href="#earG" fill="#9dbfad"/><use href="#earW" fill="#fff"/></g>
</g></svg>
<svg class="a" style="left:1253px;top:476px" width="30" height="30" viewBox="0 0 30 30">
<rect width="30" height="30" fill="#000"/><rect x="1" y="1" width="28" height="28" fill="#262626"/>
<g transform="translate(-11.976 -1.732) scale(0.03594)">
<rect x="361" y="165" width="390" height="601" fill="#447582"/><rect x="750.7" y="165" width="390" height="601" fill="#6f9e98"/>
<use href="#oct" fill="#26455e"/><use href="#oct" fill="#447582" transform="translate(1501.4 0) scale(-1 1)"/>
</g></svg>
<div class="lbl" style="left:1288px;top:418px;color:#ababab"><b style="color:#f4f4f4">WM</b> (Group)</div>
<div class="lbl" style="left:1288px;top:451px;color:#ababab"><b style="color:#f4f4f4">Fox</b> (Layer)</div>
<div class="lbl" style="left:1288px;top:484px;color:#ababab"><b style="color:#f4f4f4">All BGs</b> (Layer)</div>
<svg class="a" style="left:1450px;top:418px" width="13" height="13" viewBox="0 0 13 13"><rect x="0.5" y="0.5" width="12" height="12" rx="2.5" fill="#3e3e3e" stroke="#282828"/><path d="M3.3,6.8 L5.5,9.6 L9.3,2.6" stroke="#ececec" stroke-width="1.6" fill="none"/></svg>
<svg class="a" style="left:1450px;top:451px" width="13" height="13" viewBox="0 0 13 13"><rect x="0.5" y="0.5" width="12" height="12" rx="2.5" fill="#3e3e3e" stroke="#282828"/><path d="M3.3,6.8 L5.5,9.6 L9.3,2.6" stroke="#ececec" stroke-width="1.6" fill="none"/></svg>
<svg class="a" style="left:1450px;top:484px" width="13" height="13" viewBox="0 0 13 13"><rect x="0.5" y="0.5" width="12" height="12" rx="2.5" fill="#3e3e3e" stroke="#282828"/><path d="M3.3,6.8 L5.5,9.6 L9.3,2.6" stroke="#ececec" stroke-width="1.6" fill="none"/></svg>
<!-- layers bottom toolbar -->
<div class="panel" style="top:669px;height:22px"></div>
<div class="a" style="left:1236px;top:670px;width:21px;height:20px;background:#2e2e2e"></div>
<svg class="a" style="left:1238px;top:672px" width="17" height="16" viewBox="0 0 17 16">
<path d="M1,2.5 L8.5,5.5 L16,2.5 M1,6.5 L8.5,9.5 L16,6.5 M1,10.5 L8.5,13.5 L16,10.5" stroke="#c4c4c4" stroke-width="2" fill="none"/>
</svg>
<svg class="a" style="left:1314px;top:673px" width="15" height="13" viewBox="0 0 15 13"><rect x="0.5" y="1" width="14" height="12" fill="#c8c8c8"/><ellipse cx="7.5" cy="7" rx="4" ry="3.6" fill="#333"/></svg>
<svg class="a" style="left:1338px;top:673px" width="14" height="14" viewBox="0 0 14 14"><circle cx="7" cy="7" r="5.8" fill="none" stroke="#c8c8c8" stroke-width="1.2"/><path d="M8.5,1.3 A5.8,5.8 0 0 0 5.5,12.7 Z" fill="#c8c8c8"/></svg>
<div class="a" style="left:1358px;top:670px;font-family:'Liberation Serif',serif;font-style:italic;font-size:15px;color:#c8c8c8;line-height:18px">ƒx</div>
<svg class="a" style="left:1431px;top:673px" width="12" height="14" viewBox="0 0 12 14"><path d="M1,0.8 H7.5 L11,4.3 V13.2 H1 Z M7.5,0.8 V4.3 H11" fill="none" stroke="#c8c8c8" stroke-width="1"/></svg>
<svg class="a" style="left:1454px;top:673px" width="12" height="13" viewBox="0 0 12 13"><rect x="0" y="0" width="12" height="13" fill="#c8c8c8"/><g fill="#333"><rect x="2" y="1" width="2" height="2"/><rect x="6" y="1" width="2" height="2"/><rect x="4" y="3" width="2" height="2"/><rect x="8" y="3" width="2" height="2"/><rect x="2" y="5" width="2" height="2"/><rect x="6" y="5" width="2" height="2"/><rect x="4" y="7" width="2" height="2"/><rect x="8" y="7" width="2" height="2"/><rect x="2" y="9" width="2" height="2"/><rect x="6" y="9" width="2" height="2"/></g></svg>
<svg class="a" style="left:1476px;top:672px" width="13" height="15" viewBox="0 0 13 15"><path d="M0.5,2.5 H12.5 M4.5,2.5 V0.8 H8.5 V2.5" stroke="#c8c8c8" stroke-width="1" fill="none"/><path d="M1.5,3.5 H11.5 L10.8,14.5 H2.2 Z" fill="#c8c8c8"/><path d="M4.3,5 V13 M6.5,5 V13 M8.7,5 V13" stroke="#333" stroke-width="0.9"/></svg>
<!-- transform panel -->
<div class="a" style="left:1232px;top:691px;width:263px;height:2px;background:#444"></div>
<div class="a" style="left:1232px;top:692px;width:263px;height:23px;background:#2b2b2b"></div>
<div class="a" style="left:1251px;top:694px;width:55px;height:21px;background:#3e3e3e"></div>
<div class="a" style="left:1240px;top:698px;width:1px;height:10px;background:#555"></div><div class="a" style="left:1242px;top:698px;width:1px;height:10px;background:#555"></div>
<div class="tab on" style="left:1254px;top:694px">Transform</div>
<div class="tab" style="left:1311px;top:694px">History</div>
<div class="sep" style="left:1350px;top:698px"></div>
<div class="tab" style="left:1354px;top:694px">Navigator</div>
<div class="panel" style="top:715px;height:100px"></div>
<svg class="a" style="left:1248px;top:734px" width="41" height="41" viewBox="0 0 41 41">
<rect x="4" y="4" width="33" height="33" fill="#5a5a5a"/>
<g fill="#555" stroke="#4a4a4a" stroke-width="0.6"><rect x="1" y="1" width="6" height="6"/><rect x="17.5" y="1" width="6" height="6"/><rect x="34" y="1" width="6" height="6"/><rect x="1" y="17.5" width="6" height="6"/><rect x="17.5" y="17.5" width="6" height="6"/><rect x="34" y="17.5" width="6" height="6"/><rect x="1" y="34" width="6" height="6"/><rect x="17.5" y="34" width="6" height="6"/><rect x="34" y="34" width="6" height="6"/></g>
</svg>
<div class="lbl" style="left:1306px;top:729px;color:#cfcfcf">X:</div>
<div class="lbl" style="left:1307px;top:751px;color:#cfcfcf">Y:</div>
<div class="lbl" style="left:1306px;top:783px;color:#cfcfcf">R:</div>
<div class="lbl" style="left:1387px;top:729px;color:#cfcfcf">W:</div>
<div class="lbl" style="left:1390px;top:751px;color:#cfcfcf">H:</div>
<div class="lbl" style="left:1390px;top:783px;color:#cfcfcf">S:</div>
<div class="fld" style="left:1319px;top:726px;width:60px;height:18px;line-height:17px;color:#7d7d7d">0 in</div>
<div class="fld" style="left:1319px;top:748px;width:60px;height:18px;line-height:17px;color:#7d7d7d">0 in</div>
<div class="fld" style="left:1319px;top:780px;width:60px;height:18px;line-height:17px;color:#7d7d7d">0 °</div>
<div class="fld" style="left:1403px;top:726px;width:60px;height:18px;line-height:17px;color:#7d7d7d">0 in</div>
<div class="fld" style="left:1403px;top:748px;width:60px;height:18px;line-height:17px;color:#7d7d7d">0 in</div>
<div class="fld" style="left:1403px;top:780px;width:60px;height:18px;line-height:17px;color:#7d7d7d">0 °</div>
<svg class="a" style="left:1367px;top:786px" width="7" height="6" viewBox="0 0 7 6"><path d="M0.5,0.5 H6.5 L3.5,5 Z" fill="#999"/></svg>
<svg class="a" style="left:1451px;top:786px" width="7" height="6" viewBox="0 0 7 6"><path d="M0.5,0.5 H6.5 L3.5,5 Z" fill="#999"/></svg>
<svg class="a" style="left:1472px;top:738px" width="8" height="16" viewBox="0 0 8 16"><rect x="1.8" y="1" width="4.4" height="6" rx="2.2" fill="none" stroke="#999" stroke-width="1.1"/><rect x="1.8" y="9" width="4.4" height="6" rx="2.2" fill="none" stroke="#999" stroke-width="1.1"/><path d="M4,6 V10" stroke="#999" stroke-width="1.1"/></svg>
<svg class="a" style="left:361px;top:165px" width="779" height="601" viewBox="361 165 779 601">
<defs>
<path id="oct" d="M750.7,188.8 H613 L514,288 V641.5 L613.2,741.5 H750.7 Z"/>
<path id="face" d="M750.7,346.7 H665 L579.1,270 V292.5 L563.6,270 V533.8 L579.1,512.1 V529.7 L591.7,505.5 V515 A93 91.5 0 0 1 685,606.5 H750.7 Z"/>
<path id="bro" d="M750.7,424.3 L685,607.7 H750.7 Z"/>
<path id="band" d="M601.4,416.8 H680.7 A48 72.3 0 0 1 728.2,489.1 L738,489.1 V544.6 H707.7 A33.6 43.4 0 0 0 674.1,501.2 H665.3 A63.9 71 0 0 1 601.4,430.2 Z"/>
<path id="inner" d="M618.1,432.9 H674.1 A36.8 37 0 0 1 710.9,469.9 V485.6 H663.1 A45 45.6 0 0 1 618.1,440 Z"/>
<path id="eye" d="M643,443.8 H676.3 A20.7 21.2 0 0 1 697,465 V474.6 H669.7 A26.7 26.6 0 0 1 643,448 Z"/>
<path id="bri" d="M750.7,424.3 L724.2,575.4 H750.7 Z"/>
<path id="dia" d="M750.7,492.8 L736.5,505.5 L750.7,518.3 Z"/>
<path id="snout" d="M724.2,575.4 L685,607.7 V642.8 L750.7,693.5 V575.4 Z"/>
<path id="nose" d="M724.2,575.4 H750.7 V632.3 L724.2,610.8 Z"/>
<path id="earG" d="M596.3,305.8 L591.9,361.4 L607.6,352.3 Z"/>
<path id="earW" d="M596.3,305.8 L607.6,352.3 L620.2,345.7 Z"/>
</defs>
<rect x="361" y="165" width="390" height="601" fill="#447582"/>
<rect x="750.7" y="165" width="390" height="601" fill="#6f9e98"/>
<g>
<use href="#oct" fill="#26455e"/>
<use href="#face" fill="#447582"/>
<use href="#bro" fill="#6f9e98"/>
<use href="#band" fill="#6f9e98"/>
<use href="#inner" fill="#9dbfad"/>
<use href="#eye" fill="#26455e"/>
<use href="#bri" fill="#9dbfad"/>
<use href="#dia" fill="#6f9e98"/>
<use href="#snout" fill="#9dbfad"/>
<use href="#nose" fill="#447582"/>
<use href="#earG" fill="#9dbfad"/>
<use href="#earW" fill="#ffffff"/>
</g>
<g transform="translate(1501.4 0) scale(-1 1)">
<use href="#oct" fill="#447582"/>
<use href="#face" fill="#26455e"/>
<use href="#bro" fill="#447582"/>
<use href="#band" fill="#447582"/>
<use href="#inner" fill="#9dbfad"/>
<use href="#eye" fill="#26455e"/>
<use href="#bri" fill="#6f9e98"/>
<use href="#dia" fill="#9dbfad"/>
<use href="#snout" fill="#6f9e98"/>
<use href="#nose" fill="#26455e"/>
<use href="#earG" fill="#9dbfad"/>
<use href="#earW" fill="#ffffff"/>
</g>
</svg><svg class="a" style="left:361px;top:165px" width="779" height="601" viewBox="361 165 779 601">
<g fill="#5f8f93"><rect x="380" y="724" width="3.3" height="16"/><rect x="380" y="743.5" width="3.3" height="4"/>
<path d="M390.4,724 H393.7 V734.3 H403.9 V747.5 H390.4 Z M393.7,738.2 V743.8 H400.9 V738.2 Z" fill-rule="evenodd"/><rect x="401" y="724" width="3" height="2.7"/></g>
<text x="984.8" y="709.8" font-family="Liberation Sans" font-size="23" fill="#81aba3" textLength="27.6" lengthAdjust="spacingAndGlyphs">KB</text>
</svg>
</body></html>
